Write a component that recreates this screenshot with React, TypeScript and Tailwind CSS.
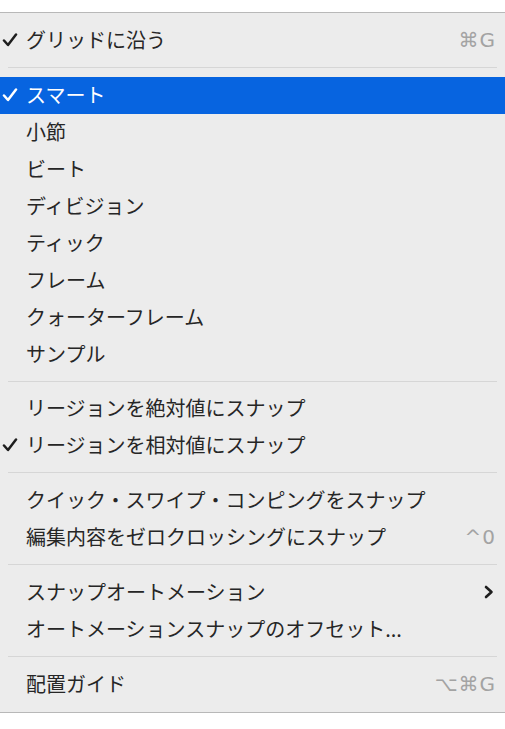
import React from "react";

type Item =
  | { kind: "sep" }
  | {
      kind: "item";
      label: string;
      checked?: boolean;
      selected?: boolean;
      shortcut?: string;
      submenu?: boolean;
    };

const items: Item[] = [
  { kind: "item", label: "グリッドに沿う", checked: true, shortcut: "⌘G" },
  { kind: "sep" },
  { kind: "item", label: "スマート", checked: true, selected: true },
  { kind: "item", label: "小節" },
  { kind: "item", label: "ビート" },
  { kind: "item", label: "ディビジョン" },
  { kind: "item", label: "ティック" },
  { kind: "item", label: "フレーム" },
  { kind: "item", label: "クォーターフレーム" },
  { kind: "item", label: "サンプル" },
  { kind: "sep" },
  { kind: "item", label: "リージョンを絶対値にスナップ" },
  { kind: "item", label: "リージョンを相対値にスナップ", checked: true },
  { kind: "sep" },
  { kind: "item", label: "クイック・スワイプ・コンピングをスナップ" },
  { kind: "item", label: "編集内容をゼロクロッシングにスナップ", shortcut: "^0" },
  { kind: "sep" },
  { kind: "item", label: "スナップオートメーション", submenu: true },
  { kind: "item", label: "オートメーションスナップのオフセット..." },
  { kind: "sep" },
  { kind: "item", label: "配置ガイド", shortcut: "⌥⌘G" },
];

function Check({ white }: { white?: boolean }) {
  return (
    <svg width="16" height="14" viewBox="0 0 16 14" className="absolute left-[2px] top-1/2 -translate-y-1/2">
      <path
        d="M2 7.5 L6 12 L14 1.5"
        fill="none"
        stroke={white ? "#ffffff" : "#1e1e1e"}
        strokeWidth="2.5"
        strokeLinecap="round"
        strokeLinejoin="round"
      />
    </svg>
  );
}

function Chevron() {
  return (
    <svg width="10" height="14" viewBox="0 0 10 14" className="mr-[2px]">
      <path d="M2 2 L7.5 7 L2 12" fill="none" stroke="#1e1e1e" strokeWidth="2.6" strokeLinecap="round" strokeLinejoin="round" />
    </svg>
  );
}

export default function App() {
  return (
    <div className="h-[729px] w-[505px] bg-white pt-[12px] font-['Noto_Sans_CJK_JP','Noto_Sans',sans-serif]">
      <div className="border-y-[1.5px] border-[#b8b8b8] bg-[#ececec] pt-[9px] pb-[10px]">
        {items.map((it, i) =>
          it.kind === "sep" ? (
            <div key={i} className="flex h-[18px] items-center px-[8px]">
              <div className="h-px w-full bg-[#d6d6d6]" />
            </div>
          ) : (
            <div
              key={i}
              className={`relative flex h-[36.9px] items-center pl-[26px] pr-[9px] text-[20px] leading-none ${
                it.selected ? "bg-[#0764e0] text-white" : "text-[#262626]"
              }`}
            >
              {it.checked && <Check white={it.selected} />}
              <span className="flex-1 whitespace-nowrap">{it.label}</span>
              {it.shortcut && (
                <span className="font-['DejaVu_Sans','Noto_Sans',sans-serif] text-[20px] tracking-[1px] text-[#a3a3a3]">
                  {it.shortcut}
                </span>
              )}
              {it.submenu && <Chevron />}
            </div>
          )
        )}
      </div>
    </div>
  );
}
